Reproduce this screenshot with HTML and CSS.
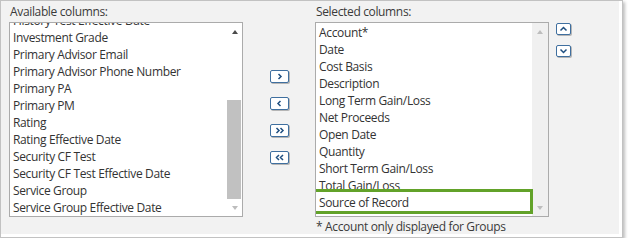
FILE: index.html
```html
<!DOCTYPE html>
<html lang="en">
<head>
  <meta charset="UTF-8" />
  <meta name="viewport" content="width=device-width, initial-scale=1.0"/>
  <title>Columns</title>
  <link rel="stylesheet" href="styles.css">
</head>
<body>
  <div class="frame">
    <div class="column">
      <div class="label">Available columns:</div>
      <div class="listbox">
        <ul class="items scrolled">
          <li>History Test Effective Date</li>
          <li>Investment Grade</li>
          <li>Primary Advisor Email</li>
          <li>Primary Advisor Phone Number</li>
          <li>Primary PA</li>
          <li>Primary PM</li>
          <li>Rating</li>
          <li>Rating Effective Date</li>
          <li>Security CF Test</li>
          <li>Security CF Test Effective Date</li>
          <li>Service Group</li>
          <li>Service Group Effective Date</li>
        </ul>
        <div class="scrollbar">
          <span class="arrow up active"></span>
          <div class="track"><div class="thumb"></div></div>
          <span class="arrow down"></span>
        </div>
      </div>
    </div>

    <div class="moves">
      <button class="btn" title="Add">
        <svg width="17" height="11" viewBox="0 0 17 11"><path d="M7.5 3 L10 5.5 L7.5 8" /></svg>
      </button>
      <button class="btn" title="Remove">
        <svg width="17" height="11" viewBox="0 0 17 11"><path d="M9.5 3 L7 5.5 L9.5 8" /></svg>
      </button>
      <button class="btn" title="Add all">
        <svg width="17" height="11" viewBox="0 0 17 11"><path d="M5.5 3 L8 5.5 L5.5 8 M9.5 3 L12 5.5 L9.5 8" /></svg>
      </button>
      <button class="btn" title="Remove all">
        <svg width="17" height="11" viewBox="0 0 17 11"><path d="M8 3 L5.5 5.5 L8 8 M12 3 L9.5 5.5 L12 8" /></svg>
      </button>
    </div>

    <div class="column">
      <div class="label">Selected columns:</div>
      <div class="listbox selected">
        <ul class="items">
          <li>Account*</li>
          <li>Date</li>
          <li>Cost Basis</li>
          <li>Description</li>
          <li>Long Term Gain/Loss</li>
          <li>Net Proceeds</li>
          <li>Open Date</li>
          <li>Quantity</li>
          <li>Short Term Gain/Loss</li>
          <li>Total Gain/Loss</li>
          <li>Source of Record</li>
        </ul>
        <div class="scrollbar grey">
          <span class="arrow up"></span>
          <div class="track"></div>
          <span class="arrow down"></span>
        </div>
        <div class="highlight"></div>
      </div>
      <div class="note">* Account only displayed for Groups</div>
    </div>

    <div class="order">
      <button class="btn small" title="Move up">
        <svg width="13" height="10" viewBox="0 0 13 10"><path d="M3.5 6.5 L6.5 3.5 L9.5 6.5" /></svg>
      </button>
      <button class="btn small" title="Move down">
        <svg width="13" height="10" viewBox="0 0 13 10"><path d="M3.5 3.5 L6.5 6.5 L9.5 3.5" /></svg>
      </button>
    </div>
  </div>
</body>
</html>
```

FILE: styles.css
```css
body {
  margin: 0;
  background: #fff;
  font-family: 'Open Sans', 'Noto Sans', sans-serif;
  font-size: 12px;
  letter-spacing: -0.35px;
  color: #333;
}
.frame {
  box-sizing: border-box;
  width: 623px;
  height: 238px;
  display: flex;
  padding: 2px 0 0 8px;
  background: #f2f2f2;
  border: 1px solid #c2c2c2;
  box-shadow: inset -3px -3px 0 #fff, 2px 2px 3px rgba(0, 0, 0, 0.25);
}
.column {
  width: 234px;
}
.label {
  line-height: 17px;
  padding-left: 1px;
  margin-bottom: 2px;
  color: #3a3a3a;
}
.listbox {
  position: relative;
  box-sizing: border-box;
  height: 195px;
  display: flex;
  background: #fff;
  border: 1px solid #ababab;
  overflow: hidden;
}
.items {
  flex: 1;
  list-style: none;
  margin: 0;
  padding: 1px 0 0 3px;
  white-space: nowrap;
  overflow: hidden;
}
.items li {
  line-height: 17px;
  height: 17px;
}
.scrolled {
  padding-top: 0;
}
.scrolled li:first-child {
  margin-top: -11px;
}
.scrollbar {
  width: 15px;
  display: flex;
  flex-direction: column;
}
.scrollbar.grey {
  width: 16px;
  background: #f0f0f0;
}
.track {
  flex: 1;
  display: flex;
  flex-direction: column;
  justify-content: flex-end;
}
.thumb {
  height: 99px;
  margin-right: 1px;
  background: #c1c1c1;
}
.arrow {
  height: 17px;
  display: flex;
  align-items: center;
  justify-content: center;
}
.arrow::before {
  content: '';
  border-left: 3.5px solid transparent;
  border-right: 3.5px solid transparent;
}
.arrow.up::before {
  border-bottom: 4px solid #bdbdbd;
}
.arrow.down::before {
  border-top: 4px solid #bdbdbd;
}
.arrow.up.active::before {
  border-bottom-color: #4a4a4a;
}
.highlight {
  position: absolute;
  left: -3px;
  top: 166px;
  width: 220px;
  height: 25px;
  box-sizing: border-box;
  border: 3px solid #62a229;
}
.note {
  line-height: 17px;
  padding: 1px 0 0 1px;
  color: #3a3a3a;
}
.moves {
  width: 72px;
  display: flex;
  flex-direction: column;
  align-items: center;
  gap: 14px;
  padding-top: 67px;
}
.btn {
  box-sizing: border-box;
  width: 19px;
  height: 13px;
  padding: 0;
  display: flex;
  align-items: center;
  justify-content: center;
  background: #fff;
  border: 1px solid #3f6f9f;
  border-radius: 2px;
  box-shadow: 1px 1px 0 #b5b5b5;
  cursor: pointer;
}
.btn svg path {
  fill: none;
  stroke: #1f4f80;
  stroke-width: 1.5;
}
.order {
  display: flex;
  flex-direction: column;
  gap: 10px;
  padding: 20px 0 0 7px;
}
.btn.small {
  width: 15px;
  height: 12px;
}
```
